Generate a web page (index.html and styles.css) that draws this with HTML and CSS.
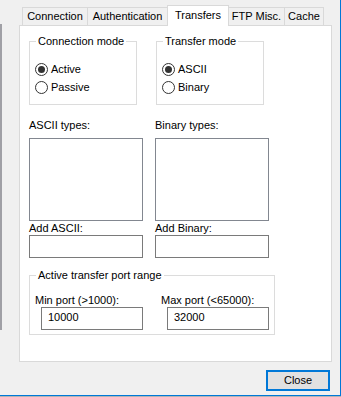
FILE: index.html
```html
<!DOCTYPE html>
<html lang="en">
<head>
<meta charset="utf-8">
<title>Transfers</title>
<link rel="stylesheet" href="styles.css">
</head>
<body>
<div class="window">
  <div class="edge"></div>
  <div class="main">
    <div class="tabs">
      <div class="tab tab-connection">Connection</div>
      <div class="tab tab-auth">Authentication</div>
      <div class="tab tab-transfers selected">Transfers</div>
      <div class="tab tab-ftp">FTP Misc.</div>
      <div class="tab tab-cache">Cache</div>
    </div>
    <div class="panel">
      <div class="modes">
        <fieldset class="group group-mode">
          <legend>Connection mode</legend>
          <label class="radio"><span class="circle checked"></span>Active</label>
          <label class="radio"><span class="circle"></span>Passive</label>
        </fieldset>
        <fieldset class="group group-mode">
          <legend>Transfer mode</legend>
          <label class="radio"><span class="circle checked"></span>ASCII</label>
          <label class="radio"><span class="circle"></span>Binary</label>
        </fieldset>
      </div>
      <div class="lists">
        <div class="col">
          <div class="label">ASCII types:</div>
          <div class="listbox"></div>
          <div class="label label-add">Add ASCII:</div>
          <input class="edit" type="text" value="">
        </div>
        <div class="col">
          <div class="label">Binary types:</div>
          <div class="listbox"></div>
          <div class="label label-add">Add Binary:</div>
          <input class="edit" type="text" value="">
        </div>
      </div>
      <fieldset class="group group-ports">
        <legend>Active transfer port range</legend>
        <div class="ports">
          <div class="port-col port-min">
            <div class="label label-port">Min port (&gt;1000):</div>
            <input class="edit edit-port" type="text" value="10000">
          </div>
          <div class="port-col">
            <div class="label label-port">Max port (&lt;65000):</div>
            <input class="edit edit-port" type="text" value="32000">
          </div>
        </div>
      </fieldset>
    </div>
    <div class="footer">
      <button class="btn" type="button">Close</button>
    </div>
  </div>
</div>
</body>
</html>
```

FILE: styles.css
```css
html {
  background: #b4b4b4;
}

body {
  margin: 0;
}

.window {
  width: 341px;
  height: 396px;
  box-sizing: border-box;
  background: #f0f0f0;
  border-right: 1px solid #0078d7;
  border-bottom: 1px solid #0078d7;
  display: flex;
  font-family: "Liberation Sans", Arial, sans-serif;
  font-size: 11px;
  line-height: 15px;
  color: #000;
}

.edge {
  flex: none;
  width: 2px;
  height: 306px;
  margin-top: 24px;
  background: #a0a0a6;
}

.main {
  flex: none;
  width: 313px;
  margin-left: 17px;
  display: flex;
  flex-direction: column;
}

/* Tabs */
.tabs {
  display: flex;
  align-items: flex-end;
  height: 20px;
  margin-top: 5px;
  padding-left: 3px;
}

.tab {
  box-sizing: border-box;
  height: 18px;
  padding-top: 1px;
  border: 1px solid #d9d9d9;
  border-bottom: none;
  background: #f0f0f0;
  text-align: center;
  white-space: nowrap;
  margin-left: -1px;
}

.tab-connection { width: 66px; margin-left: 0; }
.tab-auth { width: 81px; }
.tab-transfers { width: 62px; }
.tab-ftp { width: 57px; }
.tab-cache { width: 40px; }

.tab.selected {
  height: 21px;
  padding-top: 2px;
  margin-bottom: -1px;
  background: #fff;
  position: relative;
  z-index: 1;
}

/* Panel */
.panel {
  box-sizing: border-box;
  height: 337px;
  border: 1px solid #d9d9d9;
  background: #fff;
  padding: 8px 0 0 9px;
}

.group {
  margin: 0;
  min-width: 0;
  box-sizing: border-box;
  border: 1px solid #dcdcdc;
  padding: 11px 0 8px 5px;
}

.group legend {
  padding: 0 2px;
  margin-left: 1px;
  line-height: 15px;
}

.modes {
  display: flex;
  gap: 19px;
}

.group-mode {
  width: 108px;
}

.radio {
  display: flex;
  align-items: center;
  gap: 3px;
  height: 18px;
}

.circle {
  flex: none;
  width: 13px;
  height: 13px;
  box-sizing: border-box;
  border: 1px solid #333;
  border-radius: 50%;
  display: flex;
  align-items: center;
  justify-content: center;
  background: #fff;
}

.circle.checked::after {
  content: "";
  width: 7px;
  height: 7px;
  border-radius: 50%;
  background: #333;
}

/* Lists */
.lists {
  display: flex;
  gap: 12px;
  margin-top: 13px;
}

.col {
  width: 114px;
  display: flex;
  flex-direction: column;
}

.label {
  height: 15px;
  white-space: nowrap;
}

.listbox {
  box-sizing: border-box;
  height: 83px;
  margin-top: 5px;
  border: 1px solid #828790;
  background: #fff;
}

.label-add {
  height: 14px;
}

.edit {
  box-sizing: border-box;
  display: block;
  height: 23px;
  margin: 0;
  border: 1px solid #7a7a7a;
  border-radius: 0;
  padding: 0 0 4px 6px;
  background: #fff;
  font: inherit;
  color: #000;
  outline: none;
  appearance: none;
}

.col .edit {
  width: 114px;
}

/* Ports */
.group-ports {
  width: 246px;
  margin-top: 10px;
  padding: 10px 0 4px 5px;
}

.ports {
  display: flex;
}

.port-col {
  display: flex;
  flex-direction: column;
}

.port-min {
  width: 126px;
}

.label-port {
  height: 14px;
}

.edit-port {
  width: 102px;
  margin-left: 6px;
}

/* Footer */
.footer {
  display: flex;
  justify-content: flex-end;
  margin-top: 8px;
  padding-right: 2px;
}

.btn {
  box-sizing: border-box;
  width: 64px;
  height: 21px;
  margin: 0;
  padding: 0;
  border: 2px solid #0078d7;
  border-radius: 0;
  background: #e1e1e1;
  font: inherit;
  line-height: 15px;
  color: #000;
}
```
